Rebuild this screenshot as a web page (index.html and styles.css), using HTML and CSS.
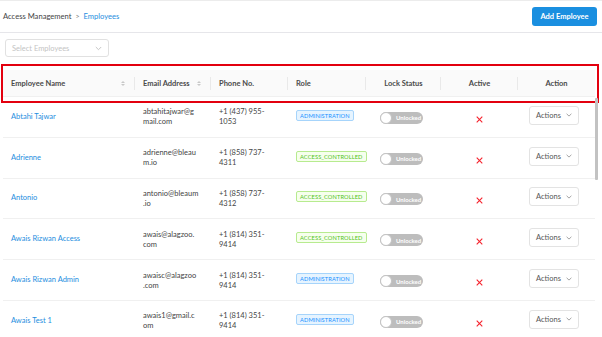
FILE: index.html
```html
<!DOCTYPE html>
<html lang="en">
<head>
<meta charset="utf-8">
<title>Employees</title>
<link rel="stylesheet" href="styles.css">
</head>
<body>
<div class="page">
  <header class="topbar">
    <nav class="crumbs">
      <span>Access Management</span>
      <span class="sep">&gt;</span>
      <a class="current">Employees</a>
    </nav>
    <button class="btn-primary">Add Employee</button>
  </header>

  <div class="filters">
    <div class="select">
      <span>Select Employees</span>
      <svg class="chev" width="7" height="5" viewBox="0 0 7 5"><path d="M0.8 1 L3.5 3.7 L6.2 1" fill="none" stroke="#bfbfbf" stroke-width="0.9"/></svg>
    </div>
  </div>

  <div class="table">
    <div class="thead">
      <div class="th sortable"><span>Employee Name</span><span class="sort"><i class="up"></i><i class="down"></i></span></div>
      <div class="th sortable"><span>Email Address</span><span class="sort"><i class="up"></i><i class="down"></i></span></div>
      <div class="th"><span>Phone No.</span></div>
      <div class="th"><span>Role</span></div>
      <div class="th center"><span>Lock Status</span></div>
      <div class="th center"><span>Active</span></div>
      <div class="th center last"><span>Action</span></div>
    </div>

    <div class="tbody">
      <div class="tr">
        <div class="td name">Abtahi Tajwar</div>
        <div class="td lines">abtahitajwar@g<br>mail.com</div>
        <div class="td lines">+1 (437) 955-<br>1053</div>
        <div class="td"><span class="tag admin">ADMINISTRATION</span></div>
        <div class="td center"><span class="toggle"><i class="knob"></i><span>Unlocked</span></span></div>
        <div class="td center"><svg class="x" width="7" height="7" viewBox="0 0 7 7"><path d="M0.7 0.7 L6.3 6.3 M6.3 0.7 L0.7 6.3" stroke="#f5222d" stroke-width="1.1"/></svg></div>
        <div class="td center"><button class="btn-actions">Actions<svg width="6" height="4" viewBox="0 0 6 4"><path d="M0.6 0.8 L3 3.1 L5.4 0.8" fill="none" stroke="#8c8c8c" stroke-width="0.8"/></svg></button></div>
      </div>
      <div class="tr">
        <div class="td name">Adrienne</div>
        <div class="td lines">adrienne@bleau<br>m.io</div>
        <div class="td lines">+1 (858) 737-<br>4311</div>
        <div class="td"><span class="tag access">ACCESS_CONTROLLED</span></div>
        <div class="td center"><span class="toggle"><i class="knob"></i><span>Unlocked</span></span></div>
        <div class="td center"><svg class="x" width="7" height="7" viewBox="0 0 7 7"><path d="M0.7 0.7 L6.3 6.3 M6.3 0.7 L0.7 6.3" stroke="#f5222d" stroke-width="1.1"/></svg></div>
        <div class="td center"><button class="btn-actions">Actions<svg width="6" height="4" viewBox="0 0 6 4"><path d="M0.6 0.8 L3 3.1 L5.4 0.8" fill="none" stroke="#8c8c8c" stroke-width="0.8"/></svg></button></div>
      </div>
      <div class="tr">
        <div class="td name">Antonio</div>
        <div class="td lines">antonio@bleaum<br>.io</div>
        <div class="td lines">+1 (858) 737-<br>4312</div>
        <div class="td"><span class="tag access">ACCESS_CONTROLLED</span></div>
        <div class="td center"><span class="toggle"><i class="knob"></i><span>Unlocked</span></span></div>
        <div class="td center"><svg class="x" width="7" height="7" viewBox="0 0 7 7"><path d="M0.7 0.7 L6.3 6.3 M6.3 0.7 L0.7 6.3" stroke="#f5222d" stroke-width="1.1"/></svg></div>
        <div class="td center"><button class="btn-actions">Actions<svg width="6" height="4" viewBox="0 0 6 4"><path d="M0.6 0.8 L3 3.1 L5.4 0.8" fill="none" stroke="#8c8c8c" stroke-width="0.8"/></svg></button></div>
      </div>
      <div class="tr">
        <div class="td name">Awais Rizwan Access</div>
        <div class="td lines">awais@alagzoo.<br>com</div>
        <div class="td lines">+1 (814) 351-<br>9414</div>
        <div class="td"><span class="tag access">ACCESS_CONTROLLED</span></div>
        <div class="td center"><span class="toggle"><i class="knob"></i><span>Unlocked</span></span></div>
        <div class="td center"><svg class="x" width="7" height="7" viewBox="0 0 7 7"><path d="M0.7 0.7 L6.3 6.3 M6.3 0.7 L0.7 6.3" stroke="#f5222d" stroke-width="1.1"/></svg></div>
        <div class="td center"><button class="btn-actions">Actions<svg width="6" height="4" viewBox="0 0 6 4"><path d="M0.6 0.8 L3 3.1 L5.4 0.8" fill="none" stroke="#8c8c8c" stroke-width="0.8"/></svg></button></div>
      </div>
      <div class="tr">
        <div class="td name">Awais Rizwan Admin</div>
        <div class="td lines">awaisc@alagzoo<br>.com</div>
        <div class="td lines">+1 (814) 351-<br>9414</div>
        <div class="td"><span class="tag admin">ADMINISTRATION</span></div>
        <div class="td center"><span class="toggle"><i class="knob"></i><span>Unlocked</span></span></div>
        <div class="td center"><svg class="x" width="7" height="7" viewBox="0 0 7 7"><path d="M0.7 0.7 L6.3 6.3 M6.3 0.7 L0.7 6.3" stroke="#f5222d" stroke-width="1.1"/></svg></div>
        <div class="td center"><button class="btn-actions">Actions<svg width="6" height="4" viewBox="0 0 6 4"><path d="M0.6 0.8 L3 3.1 L5.4 0.8" fill="none" stroke="#8c8c8c" stroke-width="0.8"/></svg></button></div>
      </div>
      <div class="tr">
        <div class="td name">Awais Test 1</div>
        <div class="td lines">awais1@gmail.c<br>om</div>
        <div class="td lines">+1 (814) 351-<br>9414</div>
        <div class="td"><span class="tag admin">ADMINISTRATION</span></div>
        <div class="td center"><span class="toggle"><i class="knob"></i><span>Unlocked</span></span></div>
        <div class="td center"><svg class="x" width="7" height="7" viewBox="0 0 7 7"><path d="M0.7 0.7 L6.3 6.3 M6.3 0.7 L0.7 6.3" stroke="#f5222d" stroke-width="1.1"/></svg></div>
        <div class="td center"><button class="btn-actions">Actions<svg width="6" height="4" viewBox="0 0 6 4"><path d="M0.6 0.8 L3 3.1 L5.4 0.8" fill="none" stroke="#8c8c8c" stroke-width="0.8"/></svg></button></div>
      </div>
    </div>

    <div class="highlight"></div>
    <div class="scroll-thumb"></div>
  </div>
</div>
</body>
</html>
```

FILE: styles.css
```css
* { box-sizing: border-box; }

html, body {
  margin: 0;
  padding: 0;
  background: #ffffff;
}

body {
  font-family: Lato, "Open Sans", "Noto Sans", sans-serif;
  color: #444;
  width: 602px;
  height: 337px;
  overflow: hidden;
}

.page {
  width: 602px;
}

/* ---------- top bar ---------- */
.topbar {
  height: 33px;
  border-top: 1px solid #ececec;
  border-bottom: 1px solid #e6e6ea;
  display: flex;
  align-items: center;
  justify-content: space-between;
  padding: 0 5px 0 3px;
}

.crumbs {
  display: flex;
  align-items: center;
  gap: 4px;
  font-size: 7.6px;
  color: #444;
  margin-top: -2px;
}

.crumbs .sep {
  color: #777;
  font-size: 7px;
}

.crumbs .current {
  color: #1e8ee0;
}

.btn-primary {
  width: 65px;
  height: 19px;
  border: none;
  border-radius: 3px;
  background: #1a8fe0;
  color: #fff;
  font-family: inherit;
  font-size: 7.5px;
  font-weight: 700;
  padding: 0;
  margin-top: -1px;
}

/* ---------- filters ---------- */
.filters {
  padding: 6px 0 0 5px;
}

.select {
  width: 104px;
  height: 18px;
  border: 1px solid #e1e1e1;
  border-radius: 3px;
  display: flex;
  align-items: center;
  justify-content: space-between;
  padding: 0 6px 0 6px;
  font-size: 7.5px;
  color: #c4c4c4;
}

/* ---------- table ---------- */
.table {
  position: relative;
  margin-top: 13px;
}

.thead,
.tr {
  display: grid;
  grid-template-columns: 132px 76px 77px 78px 75px 77px 77px;
  margin-left: 3px;
  width: 592px;
}

.thead {
  height: 27px;
  background: #fafafa;
  border-bottom: 1px solid #f0f0f0;
}

.th {
  position: relative;
  display: flex;
  align-items: center;
  padding: 0 10px 0 8px;
  font-size: 7.5px;
  font-weight: 700;
  color: #4a4a4a;
}

.th.sortable {
  justify-content: space-between;
}

.th.center {
  justify-content: center;
  padding: 0;
}

.th::after {
  content: "";
  position: absolute;
  right: 0;
  top: 7px;
  width: 1px;
  height: 13px;
  background: #e9e9e9;
}

.th.last::after {
  display: none;
}

.sort {
  display: flex;
  flex-direction: column;
  gap: 1px;
}

.sort i {
  display: block;
  width: 0;
  height: 0;
  border-left: 2.5px solid transparent;
  border-right: 2.5px solid transparent;
}

.sort .up {
  border-bottom: 2.5px solid #c8c8c8;
}

.sort .down {
  border-top: 2.5px solid #c8c8c8;
}

.tr {
  height: 40.8px;
  border-bottom: 1px solid #f0f0f0;
}

.td {
  display: flex;
  align-items: center;
  padding: 0 4px 0 8px;
  font-size: 7.5px;
  color: #444;
}

.td.center {
  justify-content: center;
  padding: 0;
}

.td.name {
  color: #1e8ee0;
  padding-bottom: 1px;
}

.td.lines {
  line-height: 10px;
  padding-top: 1px;
}

.tag {
  display: inline-block;
  height: 11px;
  line-height: 9px;
  padding: 0 3px;
  border: 1px solid;
  border-radius: 2px;
  font-size: 5.7px;
  letter-spacing: 0.1px;
  margin-bottom: 3px;
}

.tag.admin {
  color: #1890ff;
  background: #e6f4ff;
  border-color: #a6d4fb;
}

.tag.access {
  color: #52c41a;
  background: #f6ffed;
  border-color: #b7eb8f;
}

.toggle {
  position: relative;
  display: flex;
  align-items: center;
  width: 43px;
  height: 12px;
  border-radius: 6px;
  background: #bdbdbd;
  margin-left: -4px;
  margin-top: 2px;
}

.toggle .knob {
  width: 12px;
  height: 12px;
  border-radius: 50%;
  background: #fff;
  border: 1px solid #c4c4c4;
  flex: none;
}

.toggle span {
  color: #fff;
  font-size: 6px;
  font-weight: 700;
  padding-left: 4px;
}

.x {
  margin-top: 5px;
  margin-left: 0;
}

.btn-actions {
  width: 50px;
  height: 19px;
  border: 1px solid #e3e3e3;
  border-radius: 3px;
  background: #fff;
  font-family: inherit;
  font-size: 7.5px;
  color: #555;
  display: flex;
  align-items: center;
  justify-content: center;
  gap: 5px;
  padding: 0;
  margin-left: -5px;
  margin-bottom: 3px;
}

/* annotation box drawn over the header */
.highlight {
  position: absolute;
  left: 1px;
  top: -6px;
  width: 598px;
  height: 39px;
  border: 2px solid #e3000f;
  pointer-events: none;
}

.scroll-thumb {
  position: absolute;
  left: 595px;
  top: 28px;
  width: 3px;
  height: 82px;
  background: #c2c2c2;
  border-radius: 1px;
}
```
